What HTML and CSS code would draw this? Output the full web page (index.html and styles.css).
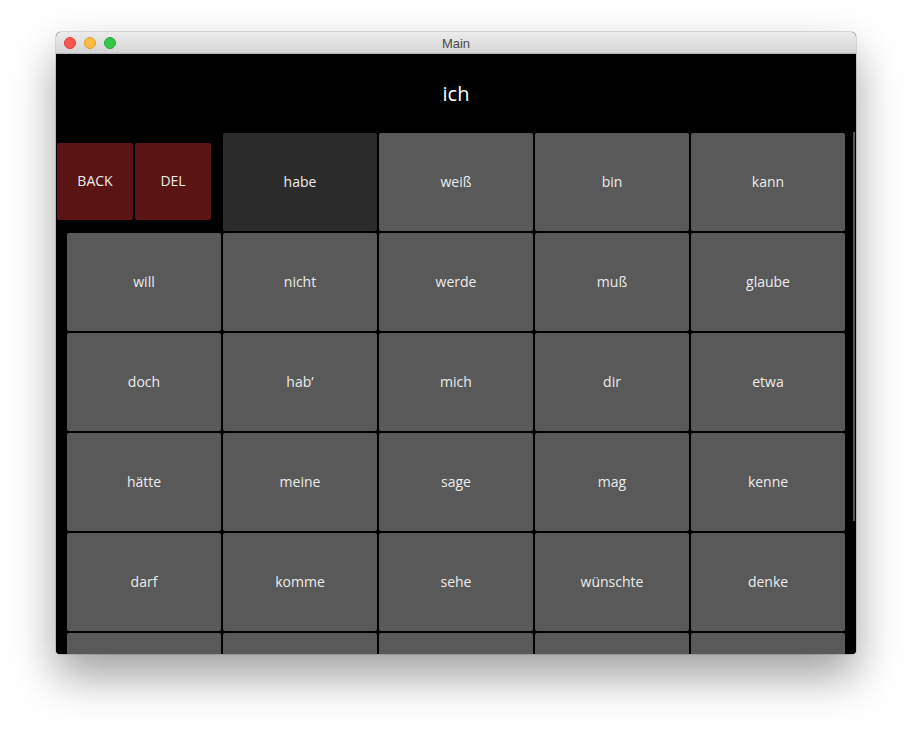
FILE: index.html
```html
<!DOCTYPE html>
<html>
<head>
<meta charset="utf-8">
<title>Main</title>
<link rel="stylesheet" href="styles.css">
</head>
<body>
<div class="window">
  <div class="titlebar">
    <div class="lights">
      <span class="light red"></span>
      <span class="light yellow"></span>
      <span class="light green"></span>
    </div>
    <div class="title">Main</div>
  </div>
  <div class="content">
    <div class="header">ich</div>
    <div class="scroller">
      <div class="grid">
        <div class="controls">
          <div class="ctl">BACK</div>
          <div class="ctl">DEL</div>
        </div>
        <div class="cell selected">habe</div>
        <div class="cell">weiß</div>
        <div class="cell">bin</div>
        <div class="cell">kann</div>
        <div class="cell">will</div>
        <div class="cell">nicht</div>
        <div class="cell">werde</div>
        <div class="cell">muß</div>
        <div class="cell">glaube</div>
        <div class="cell">doch</div>
        <div class="cell">hab’</div>
        <div class="cell">mich</div>
        <div class="cell">dir</div>
        <div class="cell">etwa</div>
        <div class="cell">hätte</div>
        <div class="cell">meine</div>
        <div class="cell">sage</div>
        <div class="cell">mag</div>
        <div class="cell">kenne</div>
        <div class="cell">darf</div>
        <div class="cell">komme</div>
        <div class="cell">sehe</div>
        <div class="cell">wünschte</div>
        <div class="cell">denke</div>
        <div class="cell"></div>
        <div class="cell"></div>
        <div class="cell"></div>
        <div class="cell"></div>
        <div class="cell"></div>
      </div>
      <div class="scrollbar"></div>
    </div>
  </div>
</div>
</body>
</html>
```

FILE: styles.css
```css
html, body {
  margin: 0;
  padding: 0;
  background: #ffffff;
}

body {
  padding: 32px 0 0 56px;
  width: 912px;
  height: 734px;
  box-sizing: border-box;
  overflow: hidden;
}

.window {
  width: 800px;
  height: 622px;
  border-radius: 5px 5px 4px 4px;
  overflow: hidden;
  box-shadow: 0 22px 45px rgba(0, 0, 0, 0.38), 0 0 0 1px rgba(0, 0, 0, 0.12);
  display: flex;
  flex-direction: column;
  background: #000;
}

.titlebar {
  height: 22px;
  flex: none;
  box-sizing: border-box;
  background: linear-gradient(#ececec, #d6d4d6);
  border-bottom: 1px solid #b8b6b8;
  display: flex;
  align-items: center;
  justify-content: center;
  position: relative;
}

.lights {
  position: absolute;
  left: 8px;
  top: 5px;
  display: flex;
  gap: 8px;
}

.light {
  width: 12px;
  height: 12px;
  border-radius: 50%;
  box-sizing: border-box;
}

.red { background: #fc5753; border: 1px solid #df3e3a; }
.yellow { background: #fdbc40; border: 1px solid #de9f34; }
.green { background: #33c748; border: 1px solid #27aa35; }

.title {
  font-family: "Liberation Sans", Arial, sans-serif;
  font-size: 13px;
  color: #4a4a4a;
  padding-top: 1px;
}

.content {
  flex: 1;
  display: flex;
  flex-direction: column;
  background: #000;
  font-family: "Open Sans", "Noto Sans", sans-serif;
}

.header {
  height: 78px;
  flex: none;
  display: flex;
  align-items: center;
  justify-content: center;
  color: #ffffff;
  font-size: 20px;
  padding-bottom: 0;
  box-sizing: border-box;
}

.scroller {
  flex: 1;
  position: relative;
  overflow: hidden;
}

.grid {
  display: grid;
  grid-template-columns: repeat(5, 154px);
  grid-auto-rows: 98px;
  gap: 2px;
  padding: 1px 0 0 11px;
}

.cell {
  background: #595959;
  border-radius: 2px;
  color: #ececec;
  font-size: 14px;
  display: flex;
  align-items: center;
  justify-content: center;
  padding-bottom: 2px;
  box-sizing: border-box;
}

.cell.selected {
  background: #2b2b2b;
}

.controls {
  display: flex;
  gap: 2px;
  margin: 10px 10px 0 -10px;
  height: 77px;
}

.ctl {
  flex: 1;
  background: #5a1414;
  border-radius: 2px;
  color: #ececec;
  font-size: 14px;
  display: flex;
  align-items: center;
  justify-content: center;
  padding-bottom: 2px;
}

.scrollbar {
  position: absolute;
  right: 1px;
  top: 0;
  width: 2px;
  height: 389px;
  background: #555555;
}
```
